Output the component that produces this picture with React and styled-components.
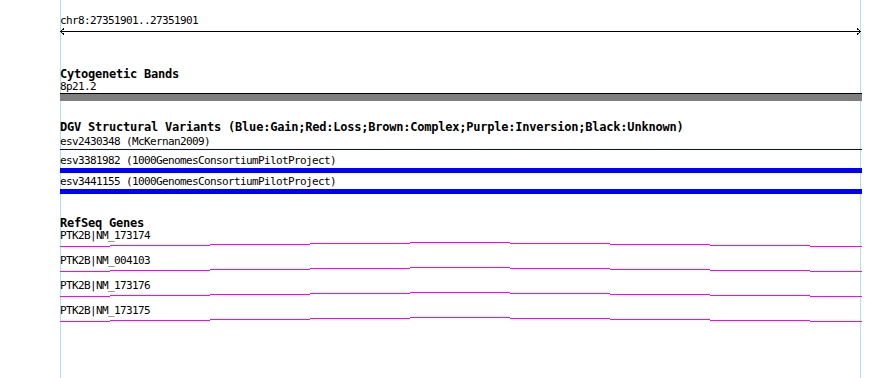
import styled, { createGlobalStyle } from 'styled-components';

const GlobalStyle = createGlobalStyle`
  html, body {
    margin: 0;
    padding: 0;
    background: #ffffff;
  }
`;

const Page = styled.div`
  position: relative;
  width: 890px;
  height: 378px;
  overflow: hidden;
  background: #ffffff;
`;

const Guide = styled.div`
  position: absolute;
  top: 0;
  bottom: 0;
  left: ${(p) => p.x}px;
  width: 1px;
  background: #a6e6ec;
`;

const Panel = styled.div`
  position: relative;
  width: 802px;
  margin-left: 60px;
  padding-top: 15px;
  display: flex;
  flex-direction: column;
`;

const Label = styled.div`
  font-family: 'DejaVu Sans Mono', 'Liberation Mono', monospace;
  font-size: 11px;
  letter-spacing: -0.62px;
  line-height: 12px;
  height: 12px;
  color: #000;
  white-space: pre;
  margin-top: ${(p) => p.mt || 0}px;
`;

const Title = styled.div`
  font-family: 'DejaVu Sans Mono', 'Liberation Mono', monospace;
  font-weight: bold;
  font-size: 12px;
  letter-spacing: -0.22px;
  line-height: 12px;
  height: 12px;
  padding-top: 1px;
  color: #000;
  white-space: pre;
  margin-top: ${(p) => p.mt || 0}px;
`;

const Arrow = styled.svg`
  display: block;
  margin-top: 1px;
  shape-rendering: crispEdges;
`;

const BandBar = styled.div`
  height: 7px;
  border-top: 1px solid #000;
  background: #807f80;
`;

const FeatureBar = styled.div`
  margin-top: 1px;
  height: ${(p) => p.h}px;
  background: ${(p) => p.color};
`;

const GeneList = styled.div`
  margin-top: 1px;
`;

const GeneRow = styled.div`
  display: flex;
  flex-direction: column;
  height: 25px;
`;

const GeneLine = styled.svg`
  display: block;
  shape-rendering: crispEdges;
`;

const exonSteps = [
  [0, 50, 4],
  [50, 150, 3],
  [150, 250, 2],
  [250, 350, 1],
  [350, 450, 0],
  [450, 550, 1],
  [550, 650, 2],
  [650, 750, 3],
  [750, 802, 4],
];

const genes = ['PTK2B|NM_173174', 'PTK2B|NM_004103', 'PTK2B|NM_173176', 'PTK2B|NM_173175'];

const Gene = ({ name }) => (
  <GeneRow>
    <Label>{name}</Label>
    <GeneLine width="802" height="13" viewBox="0 0 802 13">
      {exonSteps.map(([x1, x2, y]) => (
        <rect key={x1} x={x1} y={y} width={x2 - x1} height="1" fill="#ff00ff" />
      ))}
    </GeneLine>
  </GeneRow>
);

const App = () => (
  <Page>
    <GlobalStyle />
    <Guide x={60} />
    <Guide x={860} />
    <Panel>
      <Label>chr8:27351901..27351901</Label>
      <Arrow width="802" height="7" viewBox="0 0 802 7">
        <rect x="0" y="3" width="801" height="1" fill="#000" />
        <path d="M4 0.5 L0.5 3.5 L4 6.5 M797 0.5 L800.5 3.5 L797 6.5" stroke="#000" strokeWidth="1" fill="none" />
      </Arrow>

      <Title mt={32}>Cytogenetic Bands</Title>
      <Label mt={1}>8p21.2</Label>
      <BandBar />

      <Title mt={19}>
        DGV Structural Variants (Blue:Gain;Red:Loss;Brown:Complex;Purple:Inversion;Black:Unknown)
      </Title>
      <Label mt={3}>esv2430348 (McKernan2009)</Label>
      <FeatureBar h={1} color="#0000cc" />
      <Label mt={5}>esv3381982 (1000GenomesConsortiumPilotProject)</Label>
      <FeatureBar h={5} color="#0000ff" />
      <Label mt={3}>esv3441155 (1000GenomesConsortiumPilotProject)</Label>
      <FeatureBar h={5} color="#0000ff" />

      <Title mt={22}>RefSeq Genes</Title>
      <GeneList>
        {genes.map((g) => (
          <Gene key={g} name={g} />
        ))}
      </GeneList>
    </Panel>
  </Page>
);

export default App;
